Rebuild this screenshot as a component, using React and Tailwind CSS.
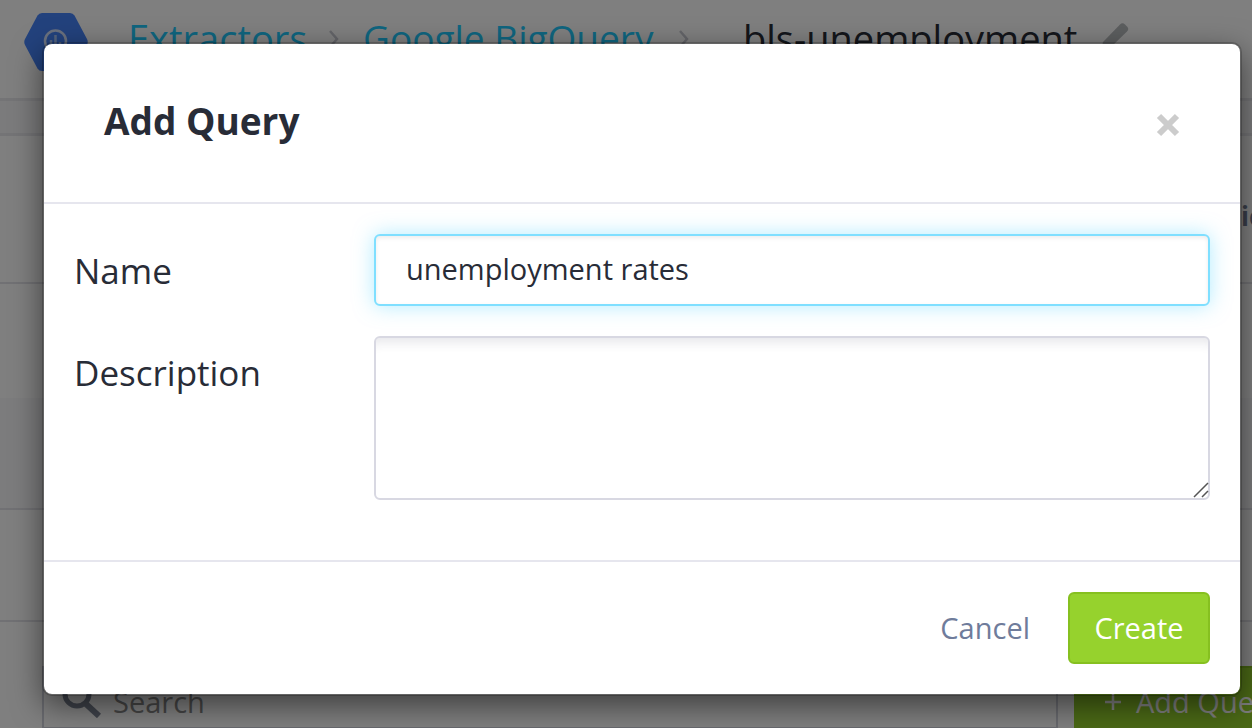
import { useState } from "react";

function Chevron() {
  return (
    <svg className="h-5 w-3 shrink-0" viewBox="0 0 12 20" fill="none" stroke="#c9cad2" strokeWidth="2.5" aria-hidden="true">
      <path d="M1 3l7 8-7 8" />
    </svg>
  );
}

function ProductLogo() {
  return (
    <svg className="h-[58px] w-16 shrink-0" viewBox="0 0 64 58" aria-hidden="true">
      <path d="M18 0h28q3 0 4.500 2.600L63 26q1.500 3 0 6L50.500 55.400Q49 58 46 58H18q-3 0-4.500-2.600L1 32q-1.500-3 0-6L13.500 2.600Q15 0 18 0z" fill="#4784fa" />
      <circle cx="31.500" cy="28" r="10.500" fill="none" stroke="#d5e2fc" strokeWidth="2.500" />
      <path d="M27 27v6M31.500 22v12M36 29v4" stroke="#a9c6fb" strokeWidth="2.500" />
      <path d="M39 36l6 6" stroke="#fff" strokeWidth="4" />
    </svg>
  );
}

function Page() {
  return (
    <div className="flex min-h-screen flex-col overflow-hidden bg-white">
      <header className="flex h-[98px] items-start pt-[13px] pl-6 whitespace-nowrap">
        <ProductLogo />
        <nav className="flex items-center pl-10 text-[38px] leading-[50px]">
          <a href="#extractors" className="w-[201px] text-[#1ecbff]">Extractors</a>
          <Chevron />
          <a href="#bigquery" className="ml-[22px] w-[316px] text-[37px] text-[#1ecbff]">Google BigQuery</a>
          <Chevron />
          <h1 className="ml-[52px] w-[356px]">bls-unemployment</h1>
          <button type="button" aria-label="Edit name">
            <svg className="h-8 w-8" viewBox="0 0 32 32" fill="#b9bcbf" aria-hidden="true">
              <path d="M21 2.500q2.500-2.500 5 0l2 2q2.500 2.500 0 5L11 26l-9 3 2-9z" />
            </svg>
          </button>
        </nav>
      </header>
      <div className="h-[38px] border-y-3 border-[#e8e8ec] bg-[#f6f6f8]" />
      <main className="flex grow flex-col">
        <section className="flex h-[148px] justify-end border-b-2 border-[#e3e3e8] pt-[62px]">
          <h2 className="w-[11px] overflow-hidden text-[26px] leading-9 font-bold text-[#727d94]">ic</h2>
        </section>
        <section className="h-[114px]" />
        <section className="h-[112px] border-b-2 border-[#e3e3e8] bg-[#f9f9fa]" />
        <section className="h-[112px] border-b-2 border-[#e3e3e8]" />
        <section className="flex gap-4 pt-[44px] pl-[42px]">
          <label className="flex h-[63px] min-w-0 grow items-center gap-[11px] border-2 border-[#d0d2dc] px-[18px]">
            <svg className="h-10 w-10 shrink-0" viewBox="0 0 40 40" fill="none" stroke="#7f8796" strokeWidth="5" aria-hidden="true">
              <circle cx="15" cy="16" r="12" />
              <path d="M24 26l13 12" strokeWidth="6" />
            </svg>
            <input type="search" placeholder="Search" className="min-w-0 grow pt-2 text-[29px] leading-9 placeholder:text-[#8b8b8b]" />
          </label>
          <button type="button" className="flex h-[70px] w-[178px] shrink-0 items-center gap-[14px] overflow-hidden border-t-2 border-[#86c020] bg-[#96d22d] pl-[30px] text-[29px] whitespace-nowrap text-white">
            <svg className="h-[18px] w-[18px] shrink-0" viewBox="0 0 18 18" stroke="currentColor" strokeWidth="2.500" aria-hidden="true">
              <path d="M9 1v16M1 9h16" />
            </svg>
            Add Query
          </button>
        </section>
      </main>
    </div>
  );
}

export default function App() {
  const [name, setName] = useState("unemployment rates");
  const [description, setDescription] = useState("");

  return (
    <div className="relative h-screen overflow-hidden font-['Open_Sans',sans-serif] text-[#282c37]">
      <Page />
      <div className="absolute inset-0 flex items-start bg-black/50 pt-[42px] pr-[10px] pl-[42px]">
        <div role="dialog" aria-modal="true" aria-labelledby="dialog-title" className="grow rounded-[10px] border-2 border-black/20 bg-white bg-clip-padding shadow-[0_10px_30px_rgba(0,0,0,0.5)]">
          <div className="flex h-40 items-start justify-between border-b-2 border-[#e6e6ee] pt-[51px] pr-[60px] pl-[60px]">
            <h2 id="dialog-title" className="text-[37px] leading-[52px] font-bold">Add Query</h2>
            <button type="button" aria-label="Close" className="pt-[18px]">
              <svg className="h-6 w-6" viewBox="0 0 24 24" stroke="#cccccc" strokeWidth="6" aria-hidden="true">
                <path d="M3 3l18 18M21 3L3 21" />
              </svg>
            </button>
          </div>
          <form onSubmit={(e) => e.preventDefault()}>
            <div className="flex flex-col gap-[30px] border-b-2 border-[#e6e6ee] px-[30px] pt-[30px] pb-[60px]">
              <div className="flex items-start">
                <label htmlFor="name" className="w-[300px] shrink-0 pt-[11px] text-[35px] leading-[52px]">Name</label>
                <input id="name" type="text" value={name} onChange={(e) => setName(e.target.value)} className="h-[72px] min-w-0 grow rounded-md border-2 border-[#7fdfff] bg-white px-[30px] pb-1 text-[29px] shadow-[inset_0_2px_4px_rgba(0,0,0,0.08),0_0_20px_rgba(102,217,255,0.5)] outline-none" />
              </div>
              <div className="flex items-start">
                <label htmlFor="description" className="w-[300px] shrink-0 pt-[11px] text-[35px] leading-[52px]">Description</label>
                <div className="relative flex grow">
                  <textarea id="description" value={description} onChange={(e) => setDescription(e.target.value)} className="h-[164px] min-w-0 grow resize-none rounded-md border-2 border-[#d8d8e2] bg-white px-[30px] py-3 text-[29px] shadow-[inset_0_16px_12px_-12px_rgba(40,40,70,0.12)] outline-none" />
                  <svg className="pointer-events-none absolute right-px bottom-0.5 h-4 w-4" viewBox="0 0 16 16" fill="none" stroke="#555555" strokeWidth="1.500" aria-hidden="true">
                    <path d="M1 15L15 1M9 15l6-6" />
                  </svg>
                </div>
              </div>
            </div>
            <div className="flex items-center justify-end gap-[38px] p-[30px]">
              <button type="button" className="text-[29px] leading-10 text-[#6f7c9b]">Cancel</button>
              <button type="submit" className="h-[72px] w-[142px] rounded-md border-2 border-[#86c020] bg-[#96d22d] text-[29px] leading-10 text-white">Create</button>
            </div>
          </form>
        </div>
      </div>
    </div>
  );
}
